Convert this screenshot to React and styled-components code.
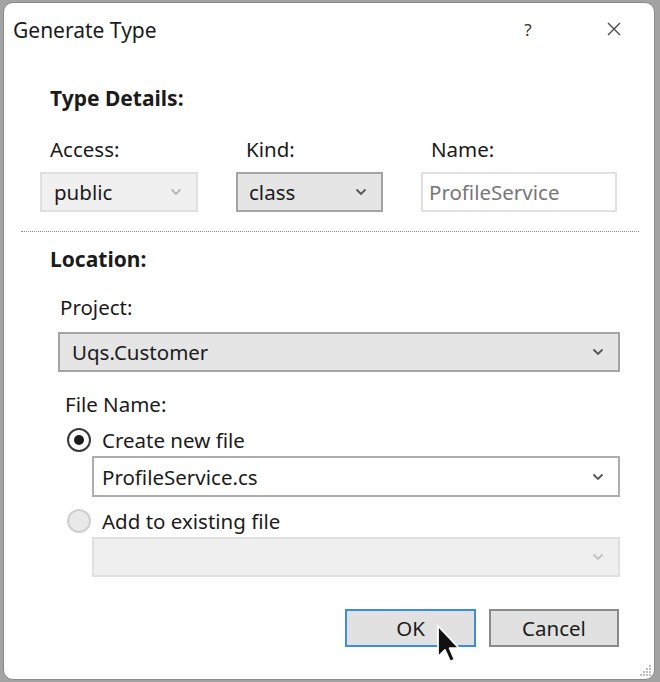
import React from "react";
import styled, { createGlobalStyle } from "styled-components";

const Global = createGlobalStyle`
  html, body { margin: 0; padding: 0; }
  body {
    background: #a3a3a3;
    font-family: "Noto Sans", "Open Sans", sans-serif;
    color: #1b1b1b;
    width: 660px;
    height: 682px;
    overflow: hidden;
  }
`;

const Dialog = styled.div`
  position: relative;
  box-sizing: border-box;
  margin: 2px 0 0 3px;
  width: 652px;
  height: 678px;
  background: #ffffff;
  border: 1px solid #8a8a8a;
  border-radius: 10px;
  display: flex;
  flex-direction: column;
`;

const TitleBar = styled.div`
  height: 52px;
  display: flex;
  align-items: center;
  padding-left: 9px;
`;

const Title = styled.div`
  flex: 1;
  font-size: 21px;
  line-height: 28px;
  padding-top: 2px;
`;

const TitleButton = styled.div`
  width: ${(p) => p.$w}px;
  display: flex;
  justify-content: center;
  align-items: center;
  font-size: 17px;
  color: #333;
  margin-right: ${(p) => p.$mr || 0}px;
`;

const Body = styled.div`
  display: flex;
  flex-direction: column;
  padding-top: 29px;
`;

const Heading = styled.div`
  font-weight: 700;
  font-size: 21px;
  line-height: 28px;
  margin-left: 46px;
  margin-top: ${(p) => p.$mt || 0}px;
`;

const Label = styled.div`
  font-size: 20.5px;
  line-height: 28px;
  margin-left: ${(p) => p.$ml || 0}px;
  margin-top: ${(p) => p.$mt || 0}px;
`;

const DetailsGrid = styled.div`
  display: grid;
  grid-template-columns: 158px 147px 196px;
  column-gap: 38px;
  row-gap: 9px;
  margin-left: 36px;
  margin-top: 23px;
`;

const GridLabel = styled.div`
  font-size: 20.5px;
  line-height: 28px;
  padding-left: 10px;
`;

const Field = styled.div`
  box-sizing: border-box;
  height: ${(p) => p.$h || 40}px;
  width: ${(p) => (p.$w ? p.$w + "px" : "auto")};
  margin-left: ${(p) => p.$ml || 0}px;
  margin-top: ${(p) => p.$mt || 0}px;
  display: flex;
  align-items: center;
  padding: 0 14px 0 ${(p) => p.$pl || 12}px;
  font-size: 20.5px;
  background: ${(p) =>
    p.$kind === "active"
      ? "#e5e5e5"
      : p.$kind === "disabled"
      ? "#f0f0f0"
      : p.$kind === "empty"
      ? "#efefef"
      : "#ffffff"};
  border: ${(p) =>
    p.$kind === "active"
      ? "2px solid #a4a4a4"
      : p.$kind === "disabled" || p.$kind === "empty"
      ? "2px solid #e0e0e0"
      : p.$kind === "text"
      ? "2px solid #e0e0e0"
      : "2px solid #adadad"};
  color: ${(p) => (p.$kind === "text" ? "#777" : "#1b1b1b")};
`;

const FieldText = styled.span`
  flex: 1;
  white-space: nowrap;
`;

const Separator = styled.div`
  margin: 19px 15px 0 17px;
  border-top: 1px dotted #8c8c8c;
  height: 0;
`;

const RadioRow = styled.div`
  display: flex;
  align-items: center;
  margin-left: 63px;
  margin-top: ${(p) => p.$mt || 0}px;
  height: 28px;
  font-size: 20.5px;
`;

const RadioCircle = styled.span`
  box-sizing: border-box;
  width: 24px;
  height: 24px;
  border-radius: 50%;
  border: 2px solid ${(p) => (p.$checked ? "#3a3a3a" : "#cfcfcf")};
  background: ${(p) => (p.$checked ? "#ffffff" : "#e9e9e9")};
  display: flex;
  align-items: center;
  justify-content: center;
  margin-right: 11px;
  &::after {
    content: "";
    display: ${(p) => (p.$checked ? "block" : "none")};
    width: 10px;
    height: 10px;
    border-radius: 50%;
    background: #1b1b1b;
  }
`;

const ButtonRow = styled.div`
  display: flex;
  justify-content: flex-end;
  gap: 13px;
  margin-top: 32px;
  margin-right: 35px;
`;

const Button = styled.div`
  position: relative;
  box-sizing: border-box;
  width: ${(p) => p.$w}px;
  height: 38px;
  display: flex;
  align-items: center;
  justify-content: center;
  font-size: 20.5px;
  background: #e1e1e1;
  border: 2px solid ${(p) => (p.$primary ? "#3a8ee0" : "#8a8a8a")};
`;

const Cursor = styled.svg`
  position: absolute;
  left: 90px;
  top: 14px;
  overflow: visible;
`;

const Grip = styled.svg`
  position: absolute;
  right: 2px;
  bottom: 2px;
`;

const Chevron = ({ color = "#555" }) => (
  <svg width="12" height="8" viewBox="0 0 12 8">
    <path d="M1.5 1.5 L6 6 L10.5 1.5" fill="none" stroke={color} strokeWidth="1.8" />
  </svg>
);

export default function App() {
  return (
    <>
      <Global />
      <Dialog>
        <TitleBar>
          <Title>Generate Type</Title>
          <TitleButton $w={30} $mr={59}>?</TitleButton>
          <TitleButton $w={24} $mr={28}>
            <svg width="14" height="14" viewBox="0 0 14 14">
              <path d="M1 1 L13 13 M13 1 L1 13" stroke="#444" strokeWidth="1.3" />
            </svg>
          </TitleButton>
        </TitleBar>
        <Body>
          <Heading>Type Details:</Heading>
          <DetailsGrid>
            <GridLabel>Access:</GridLabel>
            <GridLabel>Kind:</GridLabel>
            <GridLabel>Name:</GridLabel>
            <Field $kind="disabled">
              <FieldText>public</FieldText>
              <Chevron color="#b5b5b5" />
            </Field>
            <Field $kind="active" $pl={11}>
              <FieldText>class</FieldText>
              <Chevron color="#555" />
            </Field>
            <Field $kind="text" $pl={6}>
              <FieldText>ProfileService</FieldText>
            </Field>
          </DetailsGrid>
          <Separator />
          <Heading $mt={13}>Location:</Heading>
          <Label $ml={56} $mt={20}>Project:</Label>
          <Field $kind="active" $ml={54} $w={562} $mt={11}>
            <FieldText>Uqs.Customer</FieldText>
            <Chevron color="#555" />
          </Field>
          <Label $ml={61} $mt={18}>File Name:</Label>
          <RadioRow $mt={8}>
            <RadioCircle $checked />
            Create new file
          </RadioRow>
          <Field $kind="select" $ml={88} $w={528} $h={41} $mt={2} $pl={8}>
            <FieldText>ProfileService.cs</FieldText>
            <Chevron color="#555" />
          </Field>
          <RadioRow $mt={10}>
            <RadioCircle />
            Add to existing file
          </RadioRow>
          <Field $kind="empty" $ml={88} $w={528} $mt={2}>
            <FieldText />
            <Chevron color="#c0c0c0" />
          </Field>
          <ButtonRow>
            <Button $w={131} $primary>
              OK
              <Cursor width="24" height="38" viewBox="0 0 12 19">
                <path
                  d="M0.5 0.5 L0.5 16 L4 12.5 L6.6 18.3 L8.8 17.3 L6.3 11.6 L11 11.6 Z"
                  fill="#111"
                  stroke="#fff"
                  strokeWidth="0.9"
                  strokeLinejoin="round"
                />
              </Cursor>
            </Button>
            <Button $w={130}>Cancel</Button>
          </ButtonRow>
        </Body>
        <Grip width="14" height="14" viewBox="0 0 14 14">
          {[
            [11, 2],
            [8, 5],
            [11, 5],
            [5, 8],
            [8, 8],
            [11, 8],
            [2, 11],
            [5, 11],
            [8, 11],
            [11, 11],
          ].map(([x, y], i) => (
            <rect key={i} x={x} y={y} width="2" height="2" fill="#bdbdbd" />
          ))}
        </Grip>
      </Dialog>
    </>
  );
}
